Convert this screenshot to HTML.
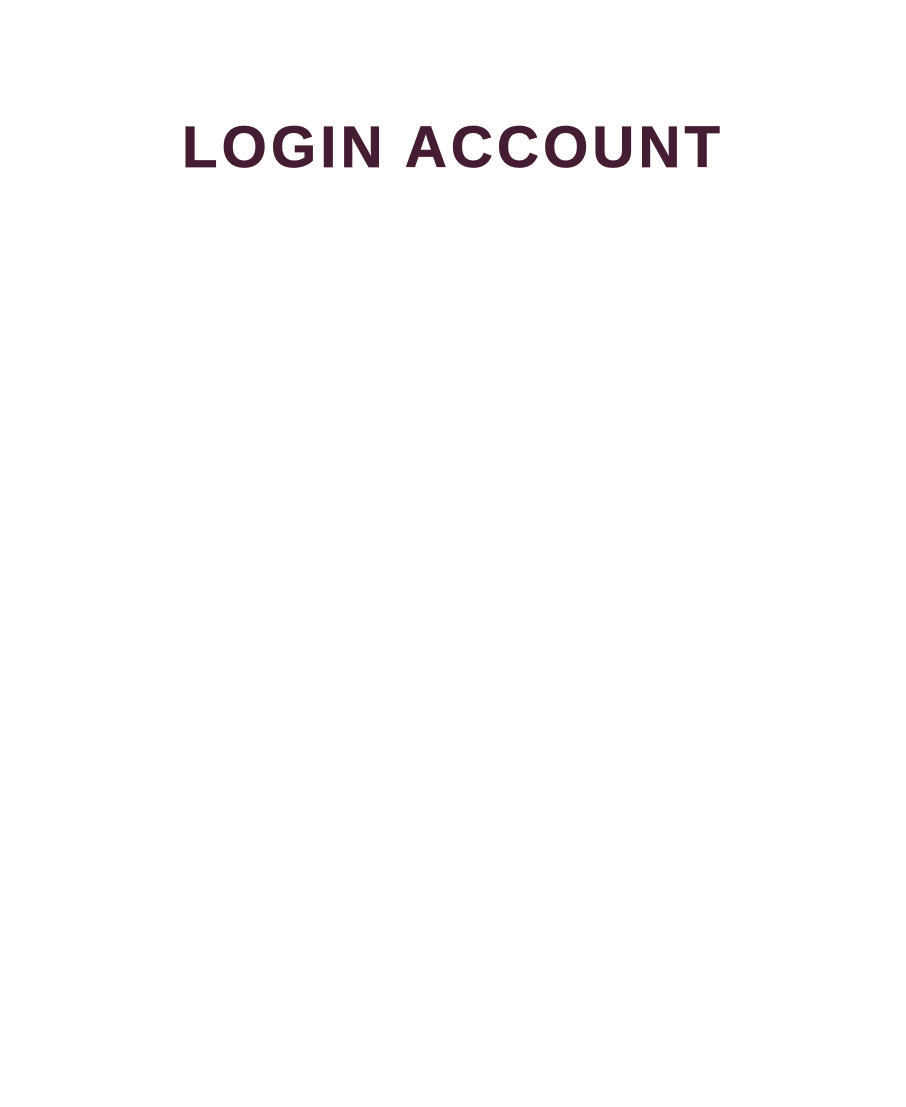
<!DOCTYPE html>
<html><head><meta charset="utf-8"><style>
html,body{margin:0;padding:0;background:#fff;width:906px;height:1107px;overflow:hidden}
h1{position:absolute;left:182px;top:119px;margin:0;font-family:"Liberation Sans",sans-serif;font-weight:700;font-size:58px;line-height:1;letter-spacing:4.2px;color:#451d33;-webkit-text-stroke:0.8px #451d33;white-space:nowrap}
</style></head><body>
<h1>LOGIN ACCOUNT</h1>
</body></html>
